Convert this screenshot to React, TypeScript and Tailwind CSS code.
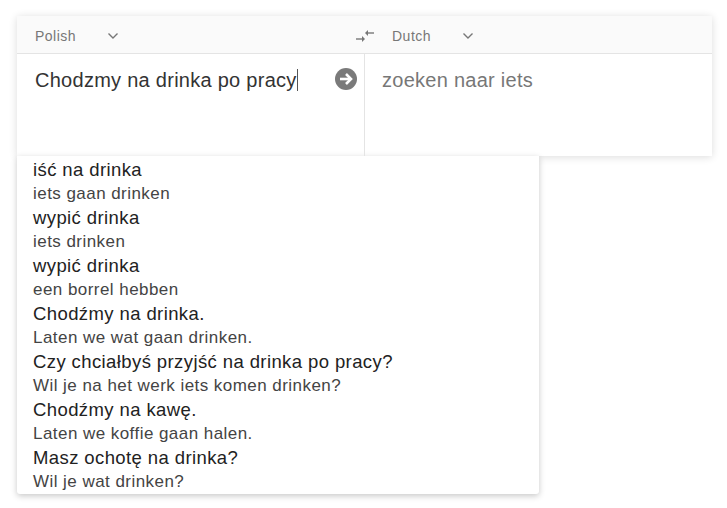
import React from "react";

const items: [string, string][] = [
  ["iść na drinka", "iets gaan drinken"],
  ["wypić drinka", "iets drinken"],
  ["wypić drinka", "een borrel hebben"],
  ["Chodźmy na drinka.", "Laten we wat gaan drinken."],
  ["Czy chciałbyś przyjść na drinka po pracy?", "Wil je na het werk iets komen drinken?"],
  ["Chodźmy na kawę.", "Laten we koffie gaan halen."],
  ["Masz ochotę na drinka?", "Wil je wat drinken?"],
];

function Chevron() {
  return (
    <svg width="12" height="8" viewBox="0 0 12 8" className="ml-[31px]">
      <path d="M1.5 1.5 L6 6 L10.5 1.5" fill="none" stroke="#777" strokeWidth="1.4" />
    </svg>
  );
}

function Swap() {
  return (
    <svg width="20" height="14" viewBox="0 0 20 14">
      <path d="M19 4 H11" stroke="#777" strokeWidth="1.4" fill="none" />
      <path d="M13 1 L10 4 L13 7 Z" fill="#777" />
      <path d="M1 10 H9" stroke="#777" strokeWidth="1.4" fill="none" />
      <path d="M7 7 L10 10 L7 13 Z" fill="#777" />
    </svg>
  );
}

function GoArrow() {
  return (
    <svg width="22" height="22" viewBox="0 0 22 22">
      <circle cx="11" cy="11" r="11" fill="#7a7a7a" />
      <path d="M5 11 H15" stroke="#fff" strokeWidth="2.6" fill="none" />
      <path d="M11 6 L16 11 L11 16" stroke="#fff" strokeWidth="2.6" fill="none" />
    </svg>
  );
}

export default function App() {
  return (
    <div
      className="w-[727px] h-[508px] bg-white pt-4 pl-[17px]"
      style={{ fontFamily: '"Liberation Sans", Arial, sans-serif' }}
    >
      <div className="w-[695px] bg-white shadow-[0_1px_8px_rgba(0,0,0,0.14)]">
        <div className="h-[38px] bg-[#fafafa] border-b border-[#e4e4e4] flex items-center text-[14px] tracking-[0.5px] text-[#777] pt-[3px]">
          <div className="w-[348px] pl-[18px] flex items-center">
            <span>Polish</span>
            <Chevron />
          </div>
          <div className="flex items-center">
            <div className="-ml-[10px]"><Swap /></div>
            <span className="ml-[17px]">Dutch</span>
            <Chevron />
          </div>
        </div>
        <div className="flex h-[102px]">
          <div className="w-[348px] border-r border-[#e4e4e4] flex items-start pl-[18px] pr-[7px] pt-[13px]">
            <div className="flex-1 text-[20px] tracking-[0.27px] text-[#333] leading-[26px]">
              Chodzmy na drinka po pracy<span className="inline-block w-px h-[22px] bg-[#555] align-[-4px]"></span>
            </div>
            <div className="pt-[1px]"><GoArrow /></div>
          </div>
          <div className="flex-1 pl-[17px] pt-[13px] text-[20px] tracking-[0.27px] text-[#777] leading-[26px]">
            zoeken naar iets
          </div>
        </div>
      </div>
      <div className="w-[522px] bg-white shadow-[0_2px_6px_rgba(0,0,0,0.22)] rounded-b-[3px] pl-[16px] pt-[2px]">
        {items.map(([a, b], i) => (
          <div key={i}>
            <div className="h-[24px] leading-[24px] text-[18.5px] tracking-[0.4px] text-[#222]">{a}</div>
            <div className="h-[24px] leading-[24px] text-[17px] tracking-[0.45px] text-[#444]">{b}</div>
          </div>
        ))}
      </div>
    </div>
  );
}
